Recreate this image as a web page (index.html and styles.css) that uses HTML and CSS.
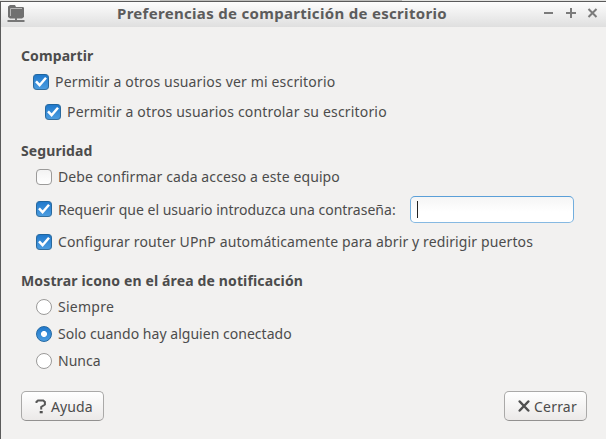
FILE: index.html
```html
<!DOCTYPE html>
<html lang="es">
<head>
<meta charset="utf-8">
<title>Preferencias de compartición de escritorio</title>
<link rel="stylesheet" href="styles.css">
</head>
<body>
<svg class="defs" width="0" height="0" aria-hidden="true">
  <symbol id="tick" viewBox="0 0 16 16"><path d="M3 7.400 6.600 11.200 13 3.800" fill="none" stroke="#fff" stroke-width="2.5"/></symbol>
</svg>
<div class="backdrop"></div>
<div class="window">
  <header class="titlebar">
    <svg class="app-icon" width="18" height="19" viewBox="0 0 18 19">
      <path d="M1 13V2.500L3 1h5l1 2h6.500q1.500 0 1.500 1v9l-2 1.500H3z" fill="#707070"/>
      <path d="M3.500 12V4.500H15" fill="none" stroke="#b8b8b8"/>
      <path d="M8 14h2v2h7.500v2H.500v-2H8z" fill="#777"/>
    </svg>
    <h1 class="title"><span class="w-title">Preferencias de compartición de escritorio</span></h1>
    <svg class="controls" width="54" height="12" viewBox="0 0 54 12">
      <path d="M0 6h9M22 6h10M27 1v10" fill="none" stroke="#7b7b7b" stroke-width="2"/>
      <path d="M44.500 2 52.500 10M52.500 2 44.500 10" fill="none" stroke="#7b7b7b" stroke-width="2"/>
    </svg>
  </header>
  <main class="content">
    <section class="group sharing">
      <h2><span class="w-compartir">Compartir</span></h2>
      <label class="option"><span class="check on"><svg><use href="#tick"/></svg></span><span class="w-ver">Permitir a otros usuarios ver mi escritorio</span></label>
      <label class="option nested"><span class="check on"><svg><use href="#tick"/></svg></span><span class="w-controlar">Permitir a otros usuarios controlar su escritorio</span></label>
    </section>
    <section class="group security">
      <h2><span class="w-seguridad">Seguridad</span></h2>
      <label class="option"><span class="check"></span><span class="w-confirmar">Debe confirmar cada acceso a este equipo</span></label>
      <div class="option"><span class="check on"><svg><use href="#tick"/></svg></span><span class="w-requerir">Requerir que el usuario introduzca una contraseña:</span><span class="entry"><i class="caret"></i></span></div>
      <label class="option last"><span class="check on"><svg><use href="#tick"/></svg></span><span class="w-router">Configurar router UPnP automáticamente para abrir y redirigir puertos</span></label>
    </section>
    <section class="group notify">
      <h2><span class="w-mostrar">Mostrar icono en el área de notificación</span></h2>
      <label class="option"><span class="radio"></span><span class="w-siempre">Siempre</span></label>
      <label class="option"><span class="radio on"></span><span class="w-solo">Solo cuando hay alguien conectado</span></label>
      <label class="option"><span class="radio"></span><span class="w-nunca">Nunca</span></label>
    </section>
    <footer class="actions">
      <button class="button"><svg width="12" height="15" viewBox="0 0 12 15"><path d="M1.500 4V2.800L3 1.500h5.200L9.900 3v2.500L6.200 8v2.500" fill="none" stroke="#585858" stroke-width="2"/><path d="M4.700 12h3v2.300h-3z" fill="#505050"/></svg><span class="w-ayuda">Ayuda</span></button>
      <button class="button"><svg width="12" height="15" viewBox="0 0 12 15"><path d="M1.700 2.500 10.300 11.500M10.300 2.500 1.700 11.500" stroke="#505050" stroke-width="2.500" stroke-linecap="round"/></svg><span class="w-cerrar">Cerrar</span></button>
    </footer>
  </main>
</div>
</body>
</html>
```
FILE: styles.css
```css
* { box-sizing: border-box; }
body {
  margin: 0;
  width: 606px;
  height: 439px;
  overflow: hidden;
  background: #f2f1f0;
  color: #4c4c4c;
  font: 14px/20px "Noto Sans", "Open Sans", sans-serif;
}
.defs { display: none; }
.backdrop { height: 1px; background: linear-gradient(90deg, #e4e4e2 160px, #bdbdbb 160px, #bdbdbb 402px, #e4e4e2 402px); }
.window { height: 438px; border: solid #5b5b5b; border-width: 1px 0 0 1px; }
.titlebar {
  display: flex;
  align-items: center;
  height: 25px;
  padding: 0 8px 0 6px;
  background: linear-gradient(#fdfdfd, #dfdfdf);
}
.app-icon { margin-bottom: 2px; }
.title {
  flex: 1;
  margin: 0;
  padding: 0 0 3px 92px;
  font-size: 15px;
  line-height: 20px;
  color: #5c5c5c;
  white-space: nowrap;
}
.controls { flex: none; margin-bottom: 3px; }
.content { padding: 19px 19px 0 20px; }
h2 { margin: 0; font-size: 14px; line-height: 20px; height: 20px; }
.option { display: flex; align-items: center; white-space: nowrap; }
.sharing { height: 95px; }
.sharing .option { height: 30px; padding-left: 12px; gap: 6px; }
.sharing h2 { margin-bottom: 1px; }
.sharing .nested { padding-left: 24px; }
.security { height: 130px; }
.security .option { height: 32px; padding-left: 15px; gap: 6px; }
.security .last { height: 34px; }
.notify { height: 120px; }
.notify h2 { margin-bottom: 3px; }
.notify .option { height: 26px; margin-bottom: 1px; padding-left: 15px; gap: 6px; }
.check, .radio {
  flex: none;
  width: 16px;
  height: 16px;
  border: 1px solid #9b9a99;
  border-radius: 4px;
  background: linear-gradient(#f3f3f3, #fff);
}
.check.on { border-color: #1e659f #28689d #346f9f; background: linear-gradient(#2079cc, #4c9de0); }
.check svg { display: block; width: 16px; height: 16px; margin: -1px; }
.radio { border-radius: 50%; background: #fff; }
.radio.on {
  border-color: #2369a3;
  background: radial-gradient(circle, #fff 2.6px, transparent 3.4px), linear-gradient(#2079cc, #4c9de0);
}
.entry {
  display: flex;
  align-items: center;
  width: 164px;
  height: 27px;
  margin-left: auto;
  margin-right: 13px;
  padding-left: 6px;
  border: 1px solid;
  border-color: #5a9fd8 #72aede #86b9e2;
  border-radius: 5px;
  background: linear-gradient(#f5f5f5, #fff 60%);
}
.caret { width: 1px; height: 17px; background: #222; }
.actions { display: flex; justify-content: space-between; }
.button {
  display: flex;
  align-items: center;
  gap: 4px;
  width: 83px;
  height: 30px;
  padding: 0 0 0 13px;
  border: 1px solid #aaa9a8;
  border-bottom-color: #929190;
  border-radius: 5px;
  background: linear-gradient(#fff, #ebe9e8);
  color: inherit;
  font: inherit;
}
.button span { padding-top: 1px; }

/* tracking per caption */
.w-title { letter-spacing: .31px; }
.w-compartir, .w-seguridad { letter-spacing: .1px; }
.w-ver { letter-spacing: .165px; }
.w-controlar { letter-spacing: .175px; }
.w-confirmar { letter-spacing: .1px; }
.w-requerir { letter-spacing: .01px; padding-top: 1px; }
.w-router { letter-spacing: .12px; }
.w-mostrar { letter-spacing: .14px; }
.w-siempre { letter-spacing: .25px; }
.w-solo { letter-spacing: .03px; }
.w-ayuda { letter-spacing: .1px; }
.w-cerrar { letter-spacing: .2px; }
```
